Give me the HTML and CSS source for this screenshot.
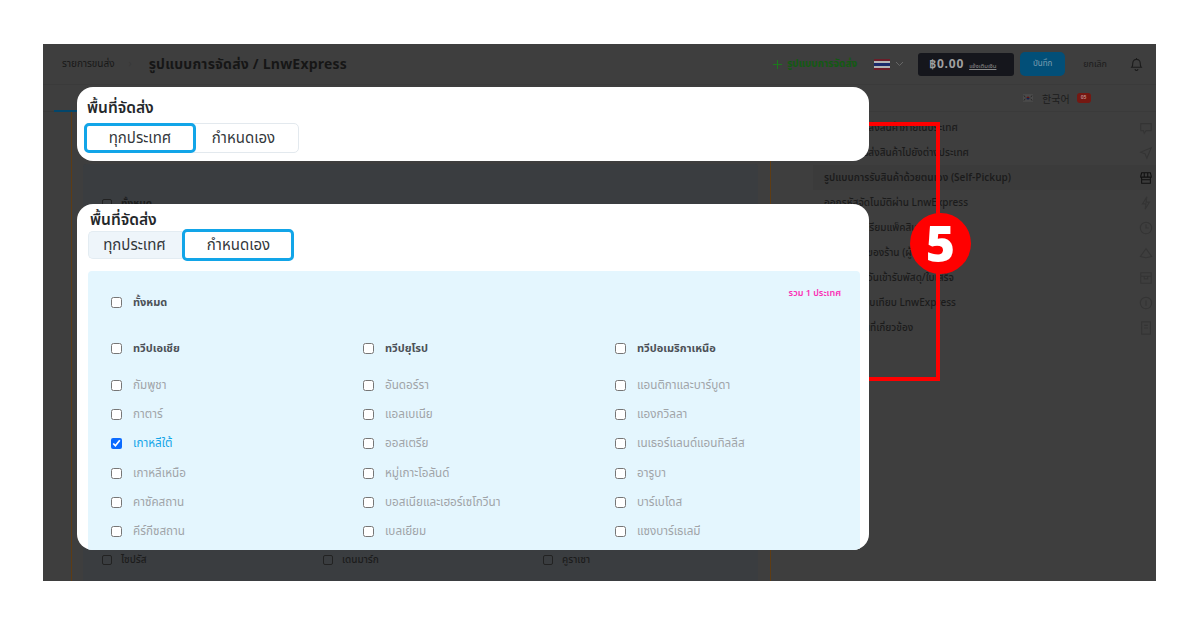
FILE: index.html
```html
<!DOCTYPE html>
<html lang="th">
<head>
<meta charset="utf-8">
<title>รูปแบบการจัดส่ง</title>
<link rel="stylesheet" href="styles.css">
</head>
<body>
<div class="screen">
  <header class="topbar">
    <span class="crumb">รายการขนส่ง</span>
    <span class="crumb-sep">›</span>
    <h1 class="page-title">รูปแบบการจัดส่ง / LnwExpress</h1>
    <span class="spacer"></span>
    <span class="add-link"><svg width="11" height="11" viewBox="0 0 12 12"><path d="M6 1v10M1 6h10" stroke="#1c7a1c" stroke-width="1.1"/></svg>รูปแบบการจัดส่ง</span>
    <svg class="flag" width="16" height="11" viewBox="0 0 16 11"><rect width="16" height="11" fill="#6b1c28"/><rect y="2" width="16" height="7" fill="#b5b5b5"/><rect y="4" width="16" height="3" fill="#1b2a6b"/></svg>
    <svg class="chev" width="9" height="6" viewBox="0 0 9 6"><path d="M1 1l3.500 3.500L8 1" fill="none" stroke="#666" stroke-width="1"/></svg>
    <span class="balance"><b>฿0.00</b><u>แจ้งเติมเงิน</u></span>
    <span class="save">บันทึก</span>
    <span class="cancel">ยกเลิก</span>
    <svg class="bell" width="13" height="14" viewBox="0 0 14 15"><path d="M2 11c1-1 1-2 1-4.500a4 4 0 0 1 8 0c0 2.500 0 3.500 1 4.500zM5.500 13a1.500 1.500 0 0 0 3 0M7 1v1.500" fill="none" stroke="#1b1b1b" stroke-width="1.200"/></svg>
  </header>
  <div class="workspace">
    <main class="main-col">
      <div class="tabs-line"><span class="tab-active"></span></div>
      <section class="edit-panel">
        <div class="ghost-btn"></div>
        <div class="ghost-box">
          <div class="ghost-row ghost-all"><i></i>ทั้งหมด</div>
          <div class="ghost-grid">
            <span><i></i>ไซปรัส</span><span><i></i>เดนมาร์ก</span><span><i></i>คูราเซา</span>
            <span><i></i>จีน</span><span><i></i>เยอรมนี</span><span><i></i>โดมินิกา</span>
          </div>
        </div>
      </section>
    </main>
    <aside class="side-col">
      <div class="lang">
        <svg class="kr-flag" width="10" height="8" viewBox="0 0 13 10"><rect width="13" height="10" fill="#4a4a4a"/><path d="M4.500 5a2 2 0 0 1 4 0z" fill="#5c1414"/><path d="M4.500 5a2 2 0 0 0 4 0z" fill="#14204f"/><path d="M1 2l2 1.500M12 2l-2 1.500M1 8l2-1.500M12 8l-2-1.500" stroke="#181818" stroke-width="1"/></svg>
        <span class="lang-name">한국어</span><span class="lang-badge">05</span>
      </div>
      <ul class="side-list">
        <li>รูปแบบการส่งสินค้าภายในประเทศ<svg class="si" viewBox="0 0 16 16"><path d="M2 3h12v8H8l-2 3-1-3H2z"/></svg></li>
        <li>รูปแบบการส่งสินค้าไปยังต่างประเทศ<svg class="si" viewBox="0 0 16 16"><path d="M14 2L2 7l5 2 2 5z"/></svg></li>
        <li class="on">รูปแบบการรับสินค้าด้วยตนเอง (Self-Pickup)<svg class="si" viewBox="0 0 16 16"><path d="M2 6l1-4h10l1 4v1H2zM3 7v7h10V7M6 2v5M10 2v5M3 10h10"/></svg></li>
        <li>ออกรหัสจัดโนมัติผ่าน LnwExpress<svg class="si" viewBox="0 0 16 16"><path d="M9 1L4 9h4l-1 6 5-8H8z"/></svg></li>
        <li>ระบบการเตรียมแพ็คสินค้า<svg class="si" viewBox="0 0 16 16"><circle cx="8" cy="8" r="6.500"/><path d="M8 4v4h3"/></svg></li>
        <li>ตั้งนโยบายของร้าน (ผู้ส่ง)<svg class="si" viewBox="0 0 16 16"><path d="M1.500 12L8 3l6.500 9-6.500 1.500z"/></svg></li>
        <li>การกำหนดวันเข้ารับพัสดุ/ใบเสร็จ<svg class="si" viewBox="0 0 16 16"><path d="M2 2h12v12H2zM2 6h12M6 6v3h4V6"/></svg></li>
        <li>ตารางเปรียบเทียบ LnwExpress<svg class="si" viewBox="0 0 16 16"><circle cx="8" cy="8" r="6.500"/><path d="M8 5v6"/></svg></li>
        <li>บทความอื่นที่เกี่ยวข้อง<svg class="si" viewBox="0 0 16 16"><path d="M3 1h10v14H3zM6 5h4M6 8h4"/></svg></li>
      </ul>
    </aside>
  </div>
  <div class="frame"></div>
  <div class="marker">5</div>

  <section class="card card-top">
    <h2 class="card-title">พื้นที่จัดส่ง</h2>
    <div class="seg seg-top">
      <span class="seg-item sel w1">ทุกประเทศ</span>
      <span class="seg-item w2">กำหนดเอง</span>
    </div>
  </section>

  <section class="card card-main">
    <h2 class="card-title">พื้นที่จัดส่ง</h2>
    <div class="seg seg-main">
      <span class="seg-item off w3">ทุกประเทศ</span>
      <span class="seg-item sel w4">กำหนดเอง</span>
    </div>
    <div class="picker">
      <div class="picker-head">
        <label class="opt strong"><input type="checkbox">ทั้งหมด</label>
        <span class="total">รวม 1 ประเทศ</span>
      </div>
      <div class="cols">
        <div class="col">
          <label class="opt strong zone"><input type="checkbox">ทวีปเอเชีย</label>
          <label class="opt"><input type="checkbox">กัมพูชา</label>
          <label class="opt"><input type="checkbox">กาตาร์</label>
          <label class="opt picked"><input type="checkbox" checked>เกาหลีใต้</label>
          <label class="opt"><input type="checkbox">เกาหลีเหนือ</label>
          <label class="opt"><input type="checkbox">คาซัคสถาน</label>
          <label class="opt"><input type="checkbox">คีร์กีซสถาน</label>
        </div>
        <div class="col">
          <label class="opt strong zone"><input type="checkbox">ทวีปยุโรป</label>
          <label class="opt"><input type="checkbox">อันดอร์รา</label>
          <label class="opt"><input type="checkbox">แอลเบเนีย</label>
          <label class="opt"><input type="checkbox">ออสเตรีย</label>
          <label class="opt"><input type="checkbox">หมู่เกาะโอลันด์</label>
          <label class="opt"><input type="checkbox">บอสเนียและเฮอร์เซโกวีนา</label>
          <label class="opt"><input type="checkbox">เบลเยียม</label>
        </div>
        <div class="col">
          <label class="opt strong zone"><input type="checkbox">ทวีปอเมริกาเหนือ</label>
          <label class="opt"><input type="checkbox">แอนติกาและบาร์บูดา</label>
          <label class="opt"><input type="checkbox">แองกวิลลา</label>
          <label class="opt"><input type="checkbox">เนเธอร์แลนด์แอนทิลลีส</label>
          <label class="opt"><input type="checkbox">อารูบา</label>
          <label class="opt"><input type="checkbox">บาร์เบโดส</label>
          <label class="opt"><input type="checkbox">แซงบาร์เธเลมี</label>
        </div>
      </div>
    </div>
  </section>
</div>
</body>
</html>
```
FILE: styles.css
```css
* { box-sizing: border-box; }
html, body { margin: 0; padding: 0; height: 628px; background: #fff; overflow: hidden; }
body { padding: 44px 44px 47px 43px; font-family: "Noto Sans Thai", "Noto Sans", "Noto Sans Thai UI", sans-serif; }
h1, h2, ul { margin: 0; padding: 0; }
ul { list-style: none; }

.screen { position: relative; width: 1113px; height: 537px; background: #3e3e3e; overflow: hidden; color: #1d1d1d; }

.topbar { display: flex; align-items: center; height: 41px; padding: 0 13px 0 19px; border-bottom: 1px solid #3a3a3a; }
.crumb { font-size: 10px; color: #181818; }
.crumb-sep { margin: 0 17px 0 14px; font-size: 10px; color: #383838; }
.page-title { font-size: 14px; font-weight: 700; color: #161616; letter-spacing: .2px; }
.spacer { flex: 1; }
.add-link { display: flex; align-items: center; gap: 4px; font-size: 10px; font-weight: 700; color: #125a12; }
.flag { margin-left: 17px; }
.chev { margin-left: 5px; }
.balance { display: flex; align-items: baseline; gap: 5px; width: 96px; height: 23px; margin-left: 14px; padding: 2px 0 0 11px; background: #15161c; border-radius: 3px; color: #8a8a8a; font-size: 6px; }
.balance b { font-size: 12px; color: #a0a0a0; letter-spacing: .8px; }
.save { width: 45px; height: 24px; margin-left: 6px; border-radius: 5px; background: #024f78; color: #7d9fb1; font-size: 8px; line-height: 24px; text-align: center; }
.cancel { margin-left: 18px; font-size: 9px; color: #1c1c1c; }
.bell { margin-left: 23px; }

.workspace { display: flex; height: 496px; }
.main-col { width: 735px; }
.tabs-line { position: relative; height: 27px; border-bottom: 1px solid #3a3a3a; }
.tab-active { position: absolute; left: 11px; bottom: -1px; width: 200px; height: 2px; background: #03466b; }
.edit-panel { position: relative; width: 700px; height: 469px; margin-left: 28px; border-left: 1px solid #5e3c14; border-right: 1px solid #5e3c14; padding: 20px 12px 0 11px; }
.ghost-btn { width: 84px; height: 16px; margin-left: 82px; border: 1px solid #03466b; border-top: 0; border-radius: 0 0 4px 4px; }
.ghost-box { height: 420px; margin-top: 16px; background: #3a3d40; border-radius: 3px; padding: 33px 19px 0; font-size: 10px; line-height: 14px; color: #1c1c1c; }
.ghost-row, .ghost-grid span { display: flex; align-items: center; gap: 9px; }
.ghost-box i { width: 10px; height: 10px; border: 1px solid #222; border-radius: 2px; }
.ghost-all { font-weight: 700; }
.ghost-grid { display: grid; grid-template-columns: 221px 220px 1fr; row-gap: 14px; margin-top: 342px; font-weight: 500; }

.side-col { width: 378px; position: relative; }
.lang { display: flex; align-items: center; height: 27px; padding-left: 245px; border-bottom: 1px solid #3a3a3a; }
.lang-name { margin-left: 9px; font-family: "Noto Sans CJK KR", sans-serif; font-size: 10px; color: #1c1c1c; }
.lang-badge { width: 14px; height: 10px; margin-left: 7px; border-radius: 3px; background: #751812; color: #b58080; font-size: 5px; line-height: 10px; text-align: center; font-weight: 700; }
.side-list { padding: 3px 0 0 35px; }
.side-list li { display: flex; align-items: center; justify-content: space-between; height: 25px; padding: 0 3px 0 11px; font-size: 10px; font-weight: 500; color: #1b1b1b; }
.side-list li.on { background: #3b3b3b; font-weight: 600; }
.si { width: 14px; height: 14px; fill: none; stroke: #343434; stroke-width: 1.200; }
.on .si { stroke: #111; }

.frame { position: absolute; left: 640px; top: 78px; width: 257px; height: 259px; border: 4px solid #f00; border-left: 0; }
.marker { position: absolute; left: 867px; top: 169px; width: 61px; height: 61px; border-radius: 50%; background: #f00; color: #fff; font-family: "Open Sans", sans-serif; font-size: 50px; font-weight: 800; line-height: 60px; text-align: center; }

.card { position: absolute; left: 34px; width: 792px; background: #fff; border-radius: 16px; }
.card-top { top: 43px; height: 74px; padding: 12px 0 0 10px; }
.card-main { top: 160px; height: 346px; padding: 7px 9px 0 13px; overflow: hidden; }
.card-title { font-size: 15.500px; font-weight: 600; color: #25282b; line-height: 19px; }

.seg { display: flex; align-items: stretch; }
.seg-top { width: 215px; height: 30px; margin: 5px 0 0 -3px; border: 1px solid #e3e9ee; border-radius: 5px; }
.seg-main { width: 206px; height: 28px; margin: 1px 0 0 -2px; }
.seg-item { display: flex; align-items: center; justify-content: center; font-size: 15px; color: #33373b; border-radius: 5px; }
.w1 { width: 112px; margin: -1px 0 -1px -1px; }
.w2 { flex: 1; padding-right: 7px; }
.w3 { width: 94px; padding-right: 2px; }
.w4 { width: 112px; margin: -2px 0 -1px; height: 32px; padding-left: 1px; }
.off { background: #eef5fa; border: 1px solid #e3ecf2; border-right: 0; border-radius: 5px 0 0 5px; }
.sel { border: 3px solid #12a5e8; background: #fff; }

.picker { height: 281px; margin: 12px 0 0 -2px; padding: 15px 19px 0 23px; background: #e4f6fe; border-radius: 4px 4px 0 0; }
.picker-head { display: flex; justify-content: space-between; height: 47px; }
.picker-head .opt { margin-top: 2px; }
.total { font-size: 9px; font-weight: 600; color: #fb2fb5; margin-top: 0; line-height: 14px; }
.cols { display: grid; grid-template-columns: 252px 252px 1fr; }
.col { display: flex; flex-direction: column; }
.opt { display: flex; align-items: center; height: 29.200px; font-size: 11.700px; color: #a0a4a8; }
.opt input { width: 11px; height: 11px; margin: 0 11px 0 0; accent-color: #0b6bff; }
.opt.strong { font-size: 11px; font-weight: 700; color: #4c5157; }
.opt.zone { height: 30px; margin-bottom: 8px; }
.opt.picked { color: #12a5e8; }
```
